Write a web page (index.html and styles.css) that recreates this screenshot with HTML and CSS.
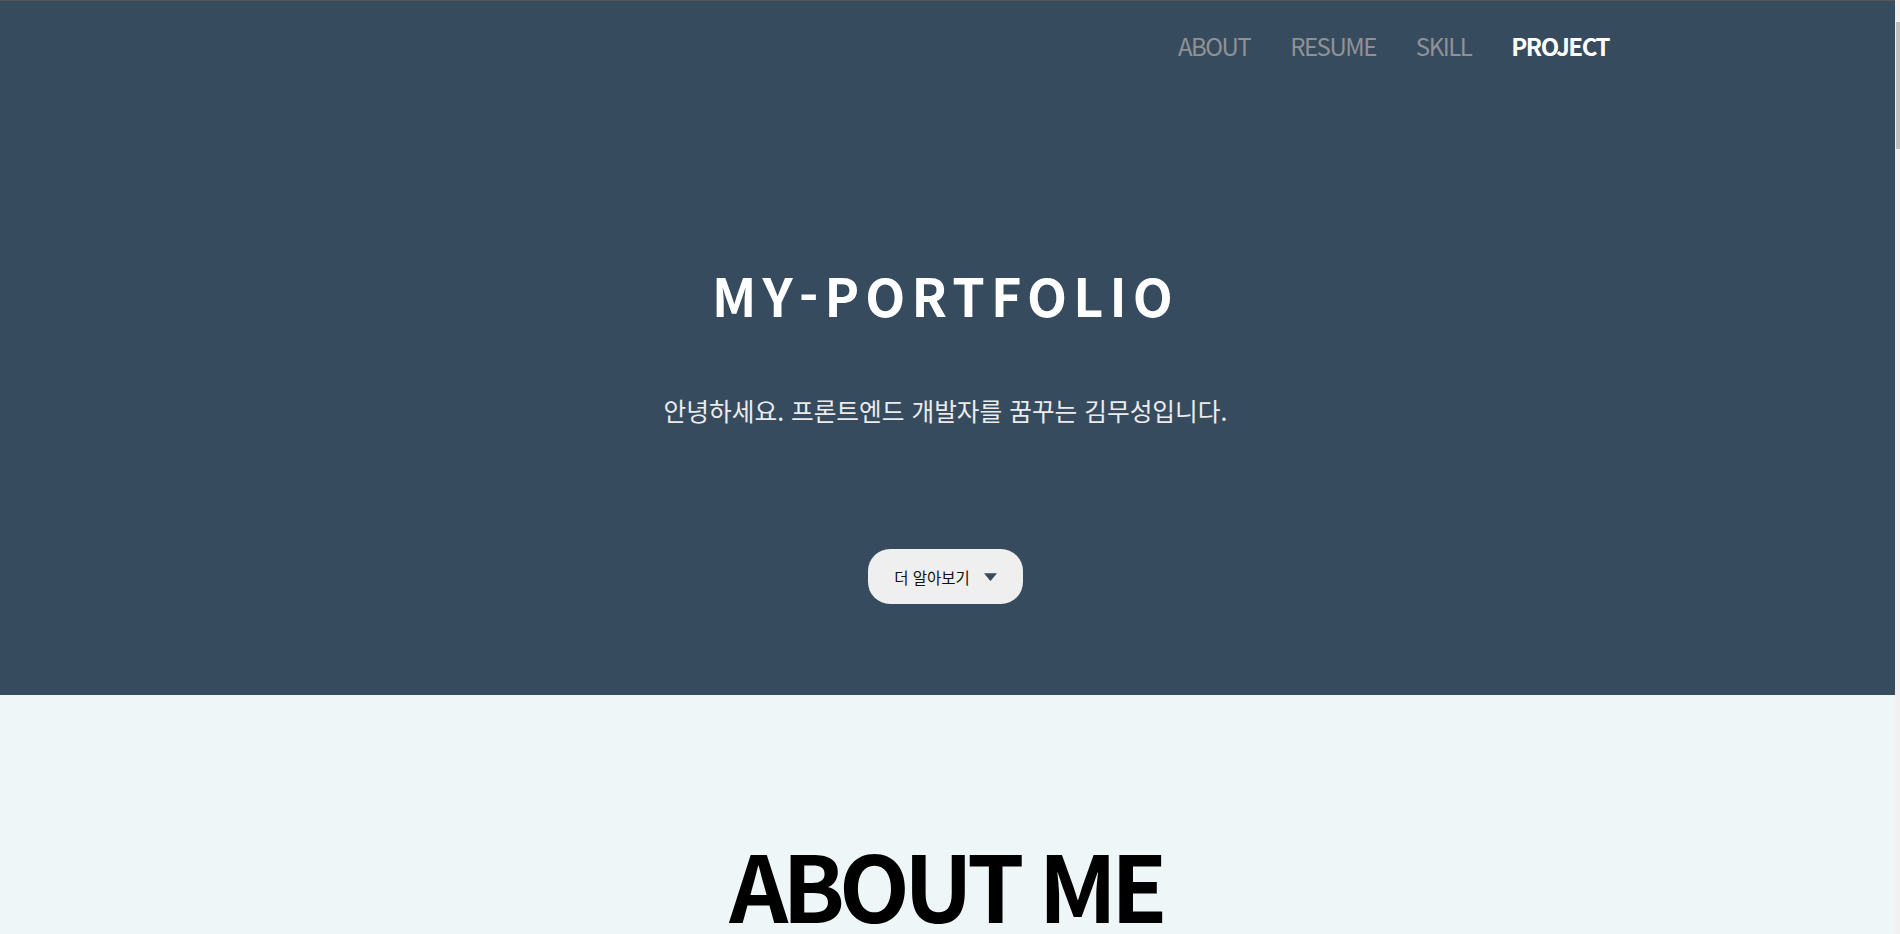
FILE: index.html
```html
<!DOCTYPE html>
<html lang="ko">
<head>
<meta charset="utf-8">
<title>MY-PORTFOLIO</title>
<link rel="stylesheet" href="styles.css">
</head>
<body>
<header class="hero">
  <nav class="nav">
    <a class="nav-link" href="#about">ABOUT</a>
    <a class="nav-link" href="#resume">RESUME</a>
    <a class="nav-link" href="#skill">SKILL</a>
    <a class="nav-link nav-link--active" href="#project">PROJECT</a>
  </nav>
  <div class="intro">
    <h1 class="intro-title">MY-PORTFOLIO</h1>
    <p class="intro-text">안녕하세요. 프론트엔드 개발자를 꿈꾸는 김무성입니다.</p>
    <button class="more-btn" type="button">
      <span>더 알아보기</span>
      <svg class="more-icon" width="13" height="8" viewBox="0 0 13 8" aria-hidden="true"><path d="M0.6 0.2 H12.4 Q13 0.2 12.6 0.8 L7 7.5 Q6.5 8 6 7.5 L0.4 0.8 Q0 0.2 0.6 0.2 Z" fill="#374b5e"/></svg>
    </button>
  </div>
</header>
<main>
  <section class="section section--about" id="about">
    <h2 class="section-title">ABOUT ME</h2>
  </section>
  <section class="section" id="resume"></section>
  <section class="section" id="skill"></section>
  <section class="section" id="project"></section>
</main>
<div class="scrollbar" aria-hidden="true"><div class="scrollbar-thumb"></div></div>
</body>
</html>
```

FILE: styles.css
```css
html {
  background: #eef6f8;
}
body {
  margin: 0;
  padding-right: 5px;
  font-family: "Noto Sans CJK KR", "Noto Sans", sans-serif;
  color: #000;
}
.scrollbar {
  position: fixed;
  top: 0;
  right: 0;
  bottom: 0;
  width: 5px;
  background: #f1f1f1;
}
.scrollbar-thumb {
  position: absolute;
  top: 22px;
  right: 0;
  width: 4px;
  height: 127px;
  background: #c1c1c1;
}
.hero {
  box-sizing: border-box;
  height: 695px;
  background: #374b5e;
  border-top: 1px solid #555;
}
.nav {
  display: flex;
  justify-content: flex-end;
  gap: 40px;
  padding: 27px 286px 0 0;
}
.nav-link {
  font-size: 24px;
  line-height: 36px;
  letter-spacing: -1.5px;
  color: #8e9296;
  text-decoration: none;
}
.nav-link--active {
  color: #fff;
  font-weight: 700;
}
.intro {
  display: flex;
  flex-direction: column;
  align-items: center;
  padding-right: 4px;
}
.intro-title {
  margin: 200px 0 0;
  font-size: 52px;
  line-height: 1.2;
  font-weight: 700;
  letter-spacing: 6.2px;
  color: #fff;
}
.intro-text {
  margin: 66px 0 0;
  font-size: 24.7px;
  line-height: 1.5;
  color: #ececec;
}
.more-btn {
  margin-top: 120px;
  display: inline-flex;
  align-items: center;
  gap: 14px;
  height: 55px;
  padding: 0 26px;
  border: none;
  border-radius: 22px;
  background: #efefef;
  font-family: inherit;
  font-size: 15.5px;
  color: #111;
  cursor: pointer;
}
.section {
  min-height: 1545px;
  background: #eef6f8;
}
.section--about {
  padding: 133px 4px 0 0;
  box-sizing: border-box;
}
.section-title {
  margin: 0;
  text-align: center;
  font-size: 92px;
  line-height: 1.2;
  font-weight: 700;
  letter-spacing: -5.9px;
}
```
